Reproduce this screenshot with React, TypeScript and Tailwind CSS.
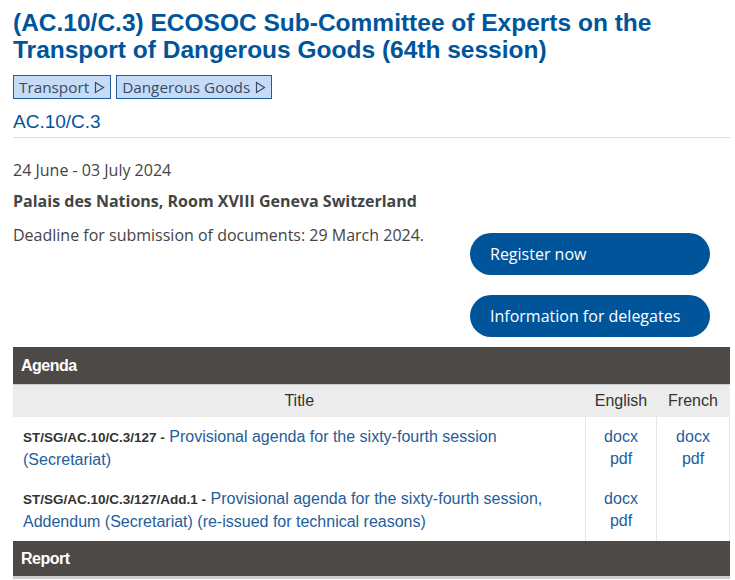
import React from "react";

const Tri = () => (
  <svg width="11" height="13" viewBox="0 0 11 13" className="ml-[5px] inline-block">
    <path d="M1.5 1.5 L9.5 6.5 L1.5 11.5 Z" fill="none" stroke="#3b4a63" strokeWidth="1.2" />
  </svg>
);

const Tag = ({ label }: { label: string }) => (
  <a className="flex h-[24px] items-center border border-[#1f5f9f] bg-[#c5dbf7] px-[5px] text-[15.3px] text-[#3b4a63]">
    {label}
    <Tri />
  </a>
);

interface Row {
  code: string;
  title: string;
  en: boolean;
  fr: boolean;
}

const rows: Row[] = [
  {
    code: "ST/SG/AC.10/C.3/127",
    title: "Provisional agenda for the sixty-fourth session (Secretariat)",
    en: true,
    fr: true,
  },
  {
    code: "ST/SG/AC.10/C.3/127/Add.1",
    title:
      "Provisional agenda for the sixty-fourth session, Addendum (Secretariat) (re-issued for technical reasons)",
    en: true,
    fr: false,
  },
];

const Links = () => (
  <div className="flex flex-col items-center leading-[22px] text-[#1f5d9b]">
    <a>docx</a>
    <a>pdf</a>
  </div>
);

export default function App() {
  return (
    <div className="min-h-[580px] bg-white pl-[13px] pr-[5px] font-['Open_Sans',sans-serif] text-[#444]">
      <h1 className="pt-[9px] font-['Liberation_Sans',Arial,sans-serif] text-[24.5px] font-bold leading-[27px] text-[#00559a]">
        (AC.10/C.3) ECOSOC Sub-Committee of Experts on the
        <br />
        Transport of Dangerous Goods (64th session)
      </h1>

      <div className="mt-[12px] flex gap-[5px]">
        <Tag label="Transport" />
        <Tag label="Dangerous Goods" />
      </div>

      <div className="mt-[12px] border-b border-[#ddd] pb-[4px] font-['Liberation_Sans',Arial,sans-serif] text-[19px] leading-[22px] text-[#00559a]">
        AC.10/C.3
      </div>

      <div className="flex">
        <div className="flex-1 pt-[21px] text-[16px] leading-[22px]">
          <p>24 June - 03 July 2024</p>
          <p className="mt-[9px] font-bold text-[#444]">Palais des Nations, Room XVIII Geneva Switzerland</p>
          <p className="mt-[12px]">Deadline for submission of documents: 29 March 2024.</p>
        </div>
        <div className="mr-[20px] flex w-[240px] flex-col gap-[20px] pt-[95px]">
          <a className="flex h-[42px] items-center rounded-full bg-[#00559a] px-[20px] text-[16px] text-white">
            Register now
          </a>
          <a className="flex h-[42px] items-center rounded-full bg-[#00559a] px-[20px] text-[16px] text-white">
            Information for delegates
          </a>
        </div>
      </div>

      <div className="mt-[10px] font-['Liberation_Sans',Arial,sans-serif]">
        <div className="flex h-[38px] items-center border-b border-[#ccc] bg-[#4d4946] px-[8px] text-[16px] font-bold tracking-[-0.5px] text-white">
          Agenda
        </div>
        <table className="w-full border-collapse text-[16px]">
          <thead>
            <tr className="h-[32px] bg-[#ececec] text-[#333]">
              <th className="font-normal">Title</th>
              <th className="w-[71px] font-normal">English</th>
              <th className="w-[73px] font-normal">French</th>
            </tr>
          </thead>
          <tbody>
            {rows.map((r, i) => (
              <tr key={i} className="h-[62px] align-top">
                <td className="px-[10px] pb-[6px] pt-[9px] leading-[22px]">
                  <span className="text-[13.5px] font-bold text-[#333]">{r.code} -</span>{" "}
                  <a className="text-[#1f5d9b]">{r.title}</a>
                </td>
                <td className="border-x border-[#e6e6e6] pt-[9px]">{r.en && <Links />}</td>
                <td className="border-r border-[#e6e6e6] pt-[9px]">{r.fr && <Links />}</td>
              </tr>
            ))}
          </tbody>
        </table>
        <div className="flex h-[38px] items-center border-b-[3px] border-[#ccc] bg-[#4d4946] px-[8px] text-[16px] font-bold tracking-[-0.5px] text-white">
          Report
        </div>
      </div>
    </div>
  );
}
